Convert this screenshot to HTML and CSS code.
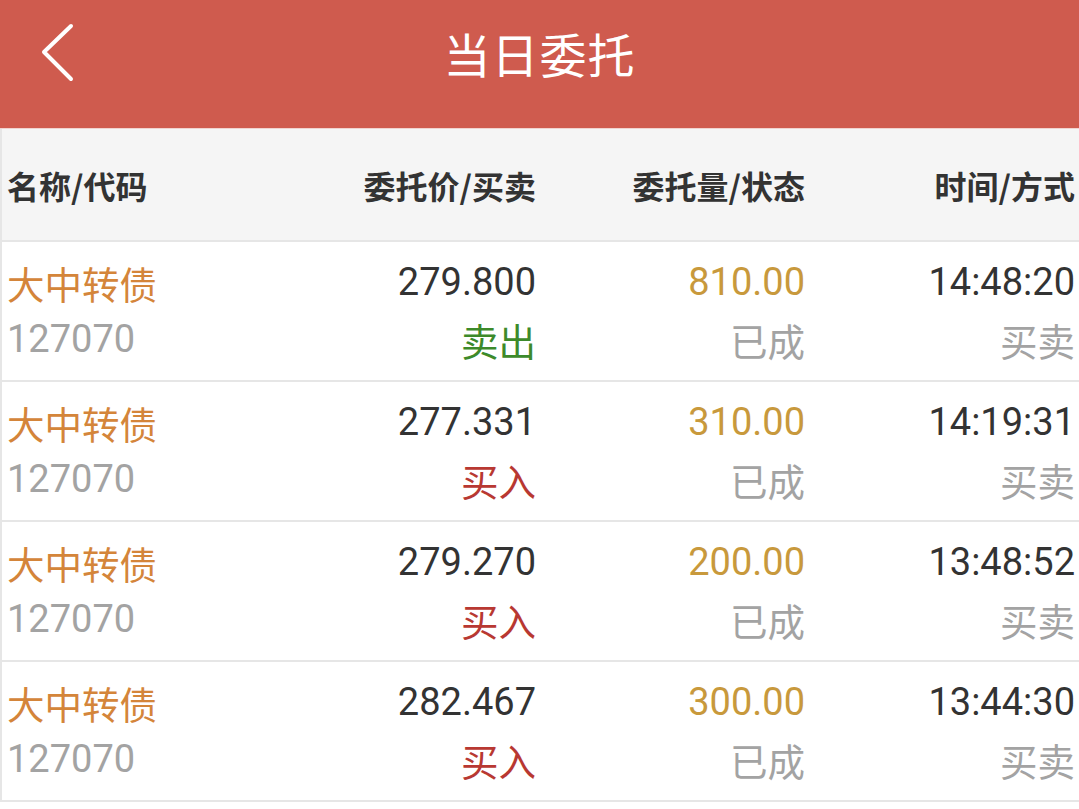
FILE: index.html
```html
<!DOCTYPE html>
<html lang="zh-CN">
<head>
<meta charset="utf-8">
<title>当日委托</title>
<link rel="stylesheet" href="styles.css">
</head>
<body>
<header class="topbar">
  <span class="back">
    <svg width="40" height="64" viewBox="0 0 40 64"><polyline points="30,6 3,32 30,59" fill="none" stroke="#fff" stroke-width="4" stroke-linecap="round" stroke-linejoin="round"/></svg>
  </span>
  <h1 class="title">当日委托</h1>
</header>
<main class="table">
  <div class="row head">
    <div class="cell c1">名称/代码</div>
    <div class="cell c2">委托价/买卖</div>
    <div class="cell c3">委托量/状态</div>
    <div class="cell c4">时间/方式</div>
  </div>
  <div class="row">
    <div class="cell c1"><div class="name">大中转债</div><div class="gray">127070</div></div>
    <div class="cell c2"><div class="dark">279.800</div><div class="sell">卖出</div></div>
    <div class="cell c3"><div class="gold">810.00</div><div class="gray">已成</div></div>
    <div class="cell c4"><div class="dark">14:48:20</div><div class="gray">买卖</div></div>
  </div>
  <div class="row">
    <div class="cell c1"><div class="name">大中转债</div><div class="gray">127070</div></div>
    <div class="cell c2"><div class="dark">277.331</div><div class="buy">买入</div></div>
    <div class="cell c3"><div class="gold">310.00</div><div class="gray">已成</div></div>
    <div class="cell c4"><div class="dark">14:19:31</div><div class="gray">买卖</div></div>
  </div>
  <div class="row">
    <div class="cell c1"><div class="name">大中转债</div><div class="gray">127070</div></div>
    <div class="cell c2"><div class="dark">279.270</div><div class="buy">买入</div></div>
    <div class="cell c3"><div class="gold">200.00</div><div class="gray">已成</div></div>
    <div class="cell c4"><div class="dark">13:48:52</div><div class="gray">买卖</div></div>
  </div>
  <div class="row">
    <div class="cell c1"><div class="name">大中转债</div><div class="gray">127070</div></div>
    <div class="cell c2"><div class="dark">282.467</div><div class="buy">买入</div></div>
    <div class="cell c3"><div class="gold">300.00</div><div class="gray">已成</div></div>
    <div class="cell c4"><div class="dark">13:44:30</div><div class="gray">买卖</div></div>
  </div>
</main>
</body>
</html>
```
FILE: styles.css
```css
html, body {
  margin: 0;
  padding: 0;
  background: #ffffff;
}
body {
  width: 1079px;
  height: 809px;
  overflow: hidden;
  font-family: Roboto, "Noto Sans CJK SC", sans-serif;
}
.topbar {
  height: 128px;
  background: #cf5b4e;
  border-bottom: 1px solid #f1d3cf;
  display: flex;
  align-items: center;
  justify-content: center;
  position: relative;
}
.back {
  position: absolute;
  left: 41px;
  top: 20px;
  display: block;
}
.back svg { display: block; }
.title {
  margin: 0 0 22px 0;
  font-family: "Noto Sans CJK SC", sans-serif;
  font-weight: 400;
  font-size: 47px;
  line-height: 60px;
  color: #ffffff;
  letter-spacing: 1px;
}
.table {
  border-left: 2px solid #e6e6e6;
}
.row {
  display: grid;
  grid-template-columns: 268px 268px 269px 1fr;
  height: 138px;
  align-items: center;
  border-bottom: 2px solid #e6e6e6;
}
.row.head {
  height: 111px;
  background: #f5f5f5;
  font-family: "Noto Sans CJK SC", sans-serif;
  font-weight: 700;
  color: #333333;
}
.cell {
  font-size: 38px;
  line-height: 57px;
}
.head .cell {
  font-size: 32px;
  line-height: 44px;
}
.c1 { padding-left: 5px; text-align: left; }
.c2, .c3 { padding-right: 2px; text-align: right; }
.c4 { padding-right: 4px; text-align: right; }
.name {
  color: #d4853a;
  font-family: "Noto Sans CJK SC", sans-serif;
  font-size: 37.5px;
}
.gray { color: #a3a3a3; }
.dark { color: #333333; }
.gold { color: #c8993c; }
.sell { color: #3d8a2a; font-family: "Noto Sans CJK SC", sans-serif; font-size: 37.5px; }
.buy { color: #b83832; font-family: "Noto Sans CJK SC", sans-serif; font-size: 37.5px; }
.c3 .gray, .c4 .gray { font-family: "Noto Sans CJK SC", sans-serif; font-size: 37.5px; }
```
